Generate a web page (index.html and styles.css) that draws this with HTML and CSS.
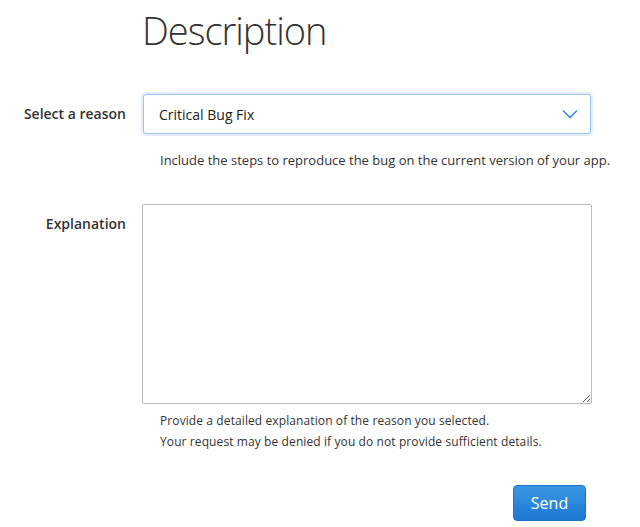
FILE: index.html
```html
<!DOCTYPE html>
<html lang="en">
<head>
<meta charset="utf-8">
<title>Description</title>
<link rel="stylesheet" href="styles.css">
</head>
<body>
<main class="form">
  <h1 class="title">Description</h1>
  <div class="row">
    <label class="label label-select">Select a reason</label>
    <div class="field">
      <div class="select">
        <span class="select-value">Critical Bug Fix</span>
        <svg class="chevron" width="16" height="10" viewBox="0 0 16 10"><path d="M1 1.5 L8 8.5 L15 1.5" fill="none" stroke="#3f8bd3" stroke-width="1.6"/></svg>
      </div>
      <p class="hint hint-select">Include the steps to reproduce the bug on the current version of your app.</p>
    </div>
  </div>
  <div class="row">
    <label class="label label-text">Explanation</label>
    <div class="field">
      <textarea class="textarea"></textarea>
      <p class="hint hint-text">Provide a detailed explanation of the reason you selected.<br>Your request may be denied if you do not provide sufficient details.</p>
    </div>
  </div>
  <div class="actions">
    <button class="send">Send</button>
  </div>
</main>
</body>
</html>
```

FILE: styles.css
```css
html, body {
  margin: 0;
  padding: 0;
  background: #ffffff;
}
body {
  font-family: "Open Sans", "Liberation Sans", sans-serif;
  color: #333333;
}
.form {
  width: 640px;
}
.title {
  margin: 0 0 0 142px;
  padding-top: 6px;
  font-size: 38px;
  line-height: 48px;
  font-weight: 300;
  color: #333333;
  letter-spacing: -1px;
}
.row {
  display: grid;
  grid-template-columns: 126px 450px;
  column-gap: 16px;
}
.row:first-of-type {
  margin-top: 40px;
}
.label {
  text-align: right;
  font-size: 14px;
  font-weight: 600;
  color: #333333;
}
.label-select {
  line-height: 40px;
}
.label-text {
  margin-top: 44px;
  line-height: 20px;
}
.field {
  display: flex;
  flex-direction: column;
}
.select {
  margin-left: 1px;
  width: 448px;
  height: 40px;
  box-sizing: border-box;
  border: 1px solid #9fc3e9;
  border-radius: 3px;
  box-shadow: 0 0 0 2px #e3eefa;
  display: flex;
  align-items: center;
  justify-content: space-between;
  padding: 0 12px 0 15px;
  background: #fff;
}
.select-value {
  font-size: 14px;
  color: #222;
}
.chevron {
  display: block;
}
.hint {
  margin: 0;
  color: #333333;
  padding-left: 18px;
  white-space: nowrap;
}
.hint-select {
  margin-top: 16px;
  font-size: 13px;
  line-height: 20px;
}
.textarea {
  margin-top: 34px;
  width: 450px;
  height: 200px;
  box-sizing: border-box;
  border: 1px solid #b9b9b9;
  border-radius: 2px;
  padding: 6px;
  font-family: inherit;
  background: #fff;
  display: block;
}
.hint-text {
  margin-top: 6px;
  font-size: 12px;
  line-height: 21px;
  letter-spacing: 0.1px;
}
.actions {
  display: flex;
  justify-content: flex-end;
  width: 586px;
  margin-top: 33px;
}
.send {
  width: 73px;
  height: 36px;
  border: 1px solid #1b72c6;
  border-radius: 4px;
  background: linear-gradient(#3a97e6, #1d78d0);
  color: #ffffff;
  font-family: inherit;
  font-size: 16px;
  padding: 0;
}
```
